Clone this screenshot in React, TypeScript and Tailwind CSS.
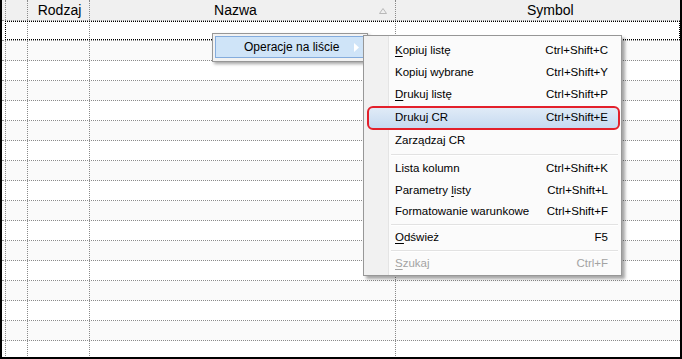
import React from 'react';

const FONT = { fontFamily: '"Liberation Sans", Arial, sans-serif' };

type Item = {
  label: React.ReactNode;
  shortcut?: string;
  h: string;
  active?: boolean;
  disabled?: boolean;
} | { sep: true; h: string };

const u = (c: string) => <span className="underline underline-offset-2">{c}</span>;

const ITEMS: Item[] = [
  { label: <>{u('K')}opiuj listę</>, shortcut: 'Ctrl+Shift+C', h: 'h-[22px]' },
  { label: 'Kopiuj wybrane', shortcut: 'Ctrl+Shift+Y', h: 'h-[22px]' },
  { label: <>{u('D')}rukuj listę</>, shortcut: 'Ctrl+Shift+P', h: 'h-[22px]' },
  { label: 'Drukuj CR', shortcut: 'Ctrl+Shift+E', h: 'h-[24px]', active: true },
  { label: 'Zarządzaj CR', h: 'h-[22px]' },
  { sep: true, h: 'h-[6px]' },
  { label: 'Lista kolumn', shortcut: 'Ctrl+Shift+K', h: 'h-[22px]' },
  { label: <>Parametry {u('l')}isty</>, shortcut: 'Ctrl+Shift+L', h: 'h-[21px]' },
  { label: 'Formatowanie warunkowe', shortcut: 'Ctrl+Shift+F', h: 'h-[22px]' },
  { sep: true, h: 'h-[4px]' },
  { label: <>{u('O')}dśwież</>, shortcut: 'F5', h: 'h-[22px]' },
  { sep: true, h: 'h-[4px]' },
  { label: <>{u('S')}zukaj</>, shortcut: 'Ctrl+F', h: 'h-[22px]', disabled: true },
];

const ROWS = Array.from({ length: 17 }, (_, i) => i);

function Row({ i }: { i: number }) {
  const bg = i % 2 === 0 ? 'bg-white' : 'bg-[#fafafa]';
  return (
    <div className={`flex h-[20px] shrink-0 border-b border-dotted border-[#8a8a8a] ${bg}`}>
      <div className="w-[3px] shrink-0" />
      <div className={`flex flex-1 ${i === 0 ? 'outline outline-1 outline-dotted outline-black -outline-offset-1' : ''}`}>
        <div className="w-[22px] shrink-0 border-l border-dotted border-[#8a8a8a]" />
        <div className="w-[62px] shrink-0 border-l border-dotted border-[#8a8a8a]" />
        <div className="w-[306px] shrink-0 border-l border-dotted border-[#8a8a8a]" />
        <div className="flex-1 border-l border-dotted border-[#8a8a8a]" />
      </div>
    </div>
  );
}

export default function App() {
  return (
    <div className="relative w-[682px] h-[359px] overflow-hidden bg-white border-l-2 border-r-2 border-b-2 border-black text-black" style={FONT}>
      {/* header */}
      <div className="flex h-[21px] bg-[#f0f0f0] border-b border-dotted border-[#8a8a8a] text-[14px]">
        <div className="w-[3px] shrink-0" />
        <div className="w-[22px] shrink-0 border-l border-dotted border-[#8a8a8a]" />
        <div className="w-[62px] shrink-0 border-l border-dotted border-[#8a8a8a] flex items-center justify-center pl-[2px]">Rodzaj</div>
        <div className="w-[306px] shrink-0 border-l border-dotted border-[#8a8a8a] flex items-center">
          <span className="flex-1 text-center pl-[2px]">Nazwa</span>
          <svg width="8" height="6" viewBox="0 0 8 6" className="mr-[8px] mt-[1px]">
            <path d="M0.5 5.5 L4 0.5 L7.5 5.5 Z" fill="none" stroke="#b8b8b8" strokeWidth="1" />
          </svg>
        </div>
        <div className="flex-1 border-l border-dotted border-[#8a8a8a] flex items-center pl-[131px]">Symbol</div>
      </div>
      {/* rows */}
      <div className="flex flex-col">
        {ROWS.map(i => <Row key={i} i={i} />)}
      </div>

      {/* context menu */}
      <div className="absolute left-[210px] top-[33px] w-[156px] h-[29px] bg-[#f2f2f2] border border-[#979797] shadow-[2px_2px_3px_rgba(0,0,0,0.35)] p-[2px] text-[12px]">
        <div className="flex items-center h-[22px] border border-[#84acdd] bg-[#cfe4f8] pl-[28px] pr-[4px]">
          <span className="flex-1">Operacje na liście</span>
          <svg width="5" height="9" viewBox="0 0 5 9" className="mr-[1px]">
            <path d="M0 0 L5 4.5 L0 9 Z" fill="#ffffff" />
          </svg>
        </div>
      </div>

      {/* submenu */}
      <div className="absolute left-[361px] top-[35px] w-[259px] h-[241px] bg-[#fbfbfb] border border-[#979797] shadow-[3px_3px_3px_rgba(0,0,0,0.35)] text-[11.5px]">
        <div className="absolute left-0 top-0 bottom-0 w-[25px] bg-[#f1f1f1] border-r border-[#e4e4e4]" />
        <div className="relative flex flex-col pt-[4px] px-[1px]">
          {ITEMS.map((it, k) => {
            if ('sep' in it) {
              return (
                <div key={k} className={`${it.h} flex items-center pl-[26px] pr-[2px]`}>
                  <div className="flex-1 h-[2px] border-t border-[#e2e2e2] border-b-white border-b" />
                </div>
              );
            }
            return (
              <div
                key={k}
                className={`${it.h} flex items-center ${it.active ? 'ml-[2px] border-2 border-[#e3202b] rounded-[6px] bg-gradient-to-b from-[#e0ebf7] to-[#c6daf1] pl-[26px] pr-[10px]' : 'pl-[30px] pr-[12px]'} ${it.disabled ? 'text-[#a3a3a3]' : ''}`}
              >
                <span className="flex-1">{it.label}</span>
                {it.shortcut && <span>{it.shortcut}</span>}
              </div>
            );
          })}
        </div>
      </div>
    </div>
  );
}
